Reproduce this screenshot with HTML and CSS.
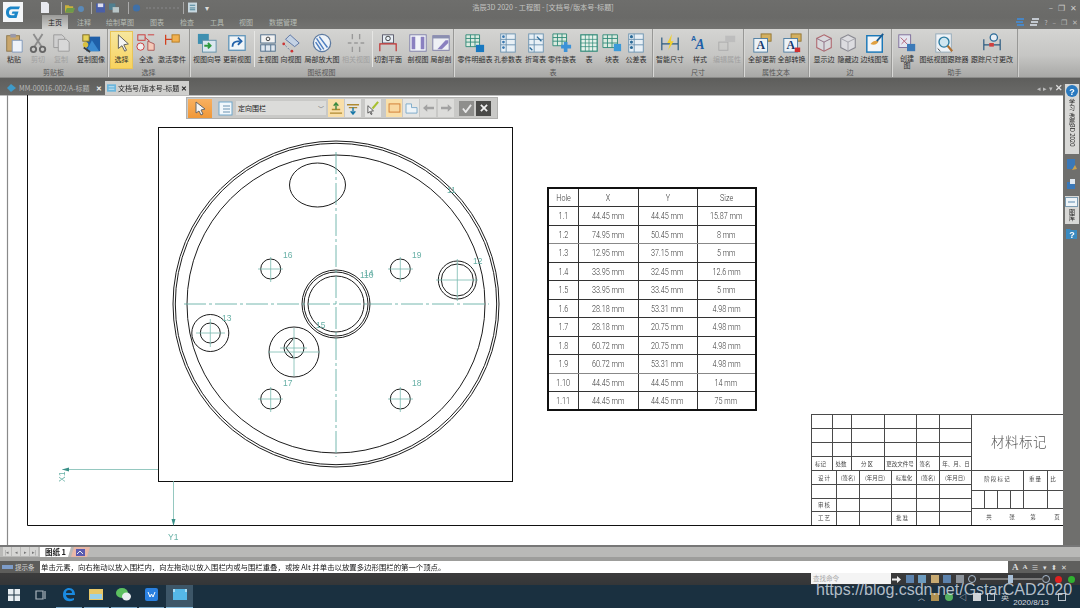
FILE: index.html
```html
<!DOCTYPE html>
<html lang="zh-CN">
<head>
<meta charset="utf-8">
<title>浩辰3D 2020 - 工程图</title>
<link rel="stylesheet" href="styles.css">
</head>
<body>
<div class="app">
  <header class="titlebar">
    <div class="logo"><svg width="20" height="20" viewBox="0 0 20 20"><rect width="20" height="20" fill="#f4f6f8"/><path d="M17 4.500H8.500C5 4.500 3 7 3 10.500S5 16 8 16h5.500l2-6.500H9.500l-.8 2.200h3l-.5 1.600H8.400C6.600 13.300 6 12 6 10.500S6.800 7.200 8.800 7.200h7z" fill="#1c86c8"/></svg></div>
    <div class="title-main">
      <div class="title-top">
        <div class="qat">
          <svg class="q1" width="10" height="11" viewBox="0 0 10 11"><path d="M1 0h6l2 2v9H1z" fill="#e8eaf0"/></svg>
          <span class="qsep q2"></span>
          <svg class="q3" width="10" height="10" viewBox="0 0 11 10"><path d="M0 2h4l1 1h4v7H0z" fill="#c9b03c"/><path d="M2 5h9l-2 5H0z" fill="#6d9a4a"/></svg>
          <svg class="q4" width="9" height="10" viewBox="0 0 9 10"><circle cx="4" cy="6" r="3" fill="#5b8ab8"/></svg>
          <span class="qsep q5"></span>
          <svg class="q6" width="9" height="10" viewBox="0 0 10 10"><rect width="10" height="10" fill="#4a5fa8"/><rect x="2" width="6" height="4" fill="#dde"/></svg>
          <svg class="q7" width="10" height="10" viewBox="0 0 11 10"><rect width="7" height="7" fill="#4f7f90"/><rect x="4" y="4" width="7" height="6" fill="#b9c6c8"/></svg>
          <span class="qsep q8"></span>
          <svg class="q9" width="9" height="10" viewBox="0 0 10 10"><circle cx="5" cy="5" r="4" fill="#3f70a8"/></svg>
          <span class="q10"></span>
          <span class="qsep q11"></span>
          <svg class="q12" width="9" height="11" viewBox="0 0 10 11"><rect width="10" height="11" fill="#c8d8e0"/><path d="M2 3h6M2 6h6M2 8h6" stroke="#3d7a90"/></svg>
          <span class="q13">▾</span>
        </div>
        <div class="doc-title">浩辰3D 2020 - 工程图 - [文档号/版本号-标题]</div>
        <div class="win-btns"><span>–</span><span>❐</span><span>✕</span></div>
      </div>
      <div class="title-tabs">
        <nav class="ribbon-tabs">
          <span class="rt active w26">主页</span>
          <span class="rt w32">注释</span>
          <span class="rt w40">绘制草图</span>
          <span class="rt w34">图表</span>
          <span class="rt w26">检查</span>
          <span class="rt w34">工具</span>
          <span class="rt w24">视图</span>
          <span class="rt w50">数据管理</span>
        </nav>
        <div class="help-btns">
          <svg width="9" height="9" viewBox="0 0 9 9"><path d="M1 1h7M0 4h7M1 7h7" stroke="#3f8fe0" stroke-width="1.400"/></svg>
          <svg width="9" height="9" viewBox="0 0 9 9"><path d="M2 1h7M1 4h7M0 7h7" stroke="#dfe8f2" stroke-width="1.600"/></svg>
          <span>?</span><span>–</span><span>❐</span><span>✕</span>
        </div>
      </div>
    </div>
  </header>

  <section class="ribbon">
    <div class="group g108">
      <div class="tools">
        <div class="tool w28"><svg class="ic" viewBox="0 0 22 22"><rect x="3" y="3" width="14" height="17" fill="#c9a66b" stroke="#8b744a"/><rect x="7" y="1" width="6" height="4" fill="#99a"/><path d="M9 8h11v13H9z" fill="#eef2f8" stroke="#7a95b8"/></svg><span>粘贴</span></div>
        <div class="tool w20 off"><svg class="ic" viewBox="0 0 22 22"><path d="M6 1l9 14M16 1L7 15" stroke="#8d8d8d" stroke-width="2"/><circle cx="6" cy="18" r="3" fill="none" stroke="#666" stroke-width="2"/><circle cx="16" cy="18" r="3" fill="none" stroke="#666" stroke-width="2"/></svg><span>剪切</span></div>
        <div class="tool w26 off"><svg class="ic" viewBox="0 0 22 22"><path d="M3 2h9l3 3v11H3z" fill="#cfcfcf" stroke="#999"/><path d="M8 7h9l3 3v10H8z" fill="#d8d8d8" stroke="#999"/></svg><span>复制</span></div>
        <div class="tool w34"><svg class="ic" viewBox="0 0 22 22"><rect x="6" y="4" width="15" height="16" fill="#1f5fa8"/><path d="M12 8l8 12H6z" fill="#3b8ad0"/><rect x="2" y="2" width="7" height="7" fill="#e6d35a" stroke="#7a6a20"/><circle cx="5" cy="13" r="3" fill="#d8c040"/><path d="M3 16l7 5" stroke="#3a3a3a" stroke-width="2"/></svg><span>复制图像</span></div>
      </div>
      <div class="glabel">剪贴板</div>
    </div>
    <div class="group g82">
      <div class="tools">
        <div class="tool w23 ml2 active"><svg class="ic" viewBox="0 0 22 22"><path d="M7 2v15l4-3 3 6 2-1-3-6 5-1z" fill="#f4f4f4" stroke="#555"/></svg><span>选择</span></div>
        <div class="tool w26"><svg class="ic" viewBox="0 0 22 22"><rect x="2" y="2" width="8" height="6" fill="none" stroke="#c33"/><path d="M13 2h7M10 5l5 4" stroke="#c33"/><circle cx="5" cy="15" r="4" fill="#eee" stroke="#c33"/><path d="M13 9v10h7V12z" fill="#f5c9b8" stroke="#a55"/></svg><span>全选</span></div>
        <div class="tool w26"><svg class="ic" viewBox="0 0 22 22"><path d="M4 2v11M4 7h10" stroke="#d2401e" stroke-width="1.400"/><rect x="11" y="2" width="8" height="8" fill="#f0b050" stroke="#b57a20"/></svg><span>激活零件</span></div>
      </div>
      <div class="glabel">选择</div>
    </div>
    <div class="group g264">
      <div class="tools">
        <div class="tool w34"><svg class="ic" viewBox="0 0 22 22"><rect x="1" y="1" width="12" height="11" fill="#3e8fb0"/><rect x="6" y="8" width="15" height="13" fill="#dbe7ef" stroke="#5e8ea8"/><path d="M8 14h6M12 11l3 3-3 3" stroke="#2e9a3e" stroke-width="2" fill="none"/></svg><span>视图向导</span></div>
        <div class="tool w26"><svg class="ic" viewBox="0 0 22 22"><rect x="2" y="3" width="18" height="16" fill="#f1f5f8" stroke="#5d93b8" stroke-width="1.400"/><path d="M6 15c0-5 3-6 8-6M12 5l4 4-4 4" fill="none" stroke="#2060a8" stroke-width="2"/></svg><span>更新视图</span></div>
        <div class="rsep w8"></div>
        <div class="tool w20"><svg class="ic" viewBox="0 0 22 22"><rect x="3" y="2" width="16" height="9" fill="#f2f2f2" stroke="#4a6a88"/><circle cx="11" cy="6.500" r="2" fill="none" stroke="#333"/><rect x="3" y="13" width="16" height="7" fill="#dfe6ee" stroke="#4a6a88"/><path d="M8 13v7M14 13v7" stroke="#4a6a88"/></svg><span>主视图</span></div>
        <div class="tool w26"><svg class="ic" viewBox="0 0 22 22"><path d="M10 2l10 9-5 4L5 7z" fill="#c4d2e4" stroke="#5670a0"/><path d="M2 11l9 9" stroke="#5670a0" stroke-dasharray="2 2"/><circle cx="3" cy="12" r="1.500" fill="#c33"/><circle cx="12" cy="20" r="1.500" fill="#c33"/></svg><span>向视图</span></div>
        <div class="tool w36"><svg class="ic" viewBox="0 0 22 22"><circle cx="11" cy="11" r="9.500" fill="#eef3f8" stroke="#5d7aa0" stroke-width="1.400"/><path d="M5 6l8 12M8 4l9 12M4 10l6 9" stroke="#4f7fc0" stroke-width="1.600"/></svg><span>局部放大图</span></div>
        <div class="tool w32 off"><svg class="ic" viewBox="0 0 22 22"><path d="M7 1v6M7 15v6M15 1v6M15 15v6M2 11h4M9 11h4M16 11h4" stroke="#999" stroke-width="1.500"/></svg><span>相关视图</span></div>
        <div class="rsep w0"></div>
        <div class="tool w32"><svg class="ic" viewBox="0 0 22 22"><rect x="5" y="2" width="12" height="9" fill="#e7eef5" stroke="#556"/><circle cx="11" cy="6" r="2.500" fill="none" stroke="#333"/><path d="M2 20v-8h18v8" fill="none" stroke="#c03030" stroke-width="1.300"/></svg><span>切割平面</span></div>
        <div class="tool w28"><svg class="ic" viewBox="0 0 22 22"><rect x="2" y="2" width="18" height="18" fill="#f2f4f8" stroke="#7a7aa8"/><path d="M4 4h4v14H4zM14 4h4v14h-4z" fill="#8a80c0"/></svg><span>剖视图</span></div>
        <div class="tool w18"><svg class="ic" viewBox="0 0 22 22"><rect x="2" y="3" width="18" height="16" fill="#eef0f5" stroke="#7a7aa8"/><rect x="2" y="3" width="18" height="3" fill="#8a8fb0"/><path d="M7 18l9-10h3v3l-7 7z" fill="#8a80c0"/></svg><span>局部剖</span></div>
      </div>
      <div class="glabel">图纸视图</div>
    </div>
    <div class="group g199">
      <div class="tools">
        <div class="tool w42"><svg class="ic" viewBox="0 0 22 22"><path d="M1 2h15v13H1z" fill="#dcebe0" stroke="#2f8a78"/><path d="M1 6h15M1 10h15M6 2v13M11 2v13" stroke="#2f8a78"/><rect x="12" y="13" width="9" height="8" fill="#1878c0"/></svg><span>零件明细表</span></div>
        <div class="tool w24"><svg class="ic" viewBox="0 0 22 22"><rect x="3" y="1" width="16" height="20" fill="#e8f0f6" stroke="#6a92b0"/><path d="M9 1v20M3 7h16M3 13h16" stroke="#6a92b0"/><circle cx="6" cy="4" r="1.500" fill="#3a78b0"/><circle cx="6" cy="10" r="1.500" fill="#3a78b0"/><circle cx="6" cy="16" r="1.500" fill="#3a78b0"/></svg><span>孔参数表</span></div>
        <div class="tool w31"><svg class="ic" viewBox="0 0 22 22"><rect x="3" y="1" width="16" height="20" fill="#e8f0f6" stroke="#6a92b0"/><path d="M9 1v20M3 7h16M3 13h16" stroke="#6a92b0"/><path d="M4 16l3 3M12 4l5 5" stroke="#2a6a98" stroke-width="1.500"/></svg><span>折弯表</span></div>
        <div class="tool w22"><svg class="ic" viewBox="0 0 22 22"><path d="M1 1h15v13H1z" fill="#dcebe0" stroke="#2f8a78"/><path d="M1 5h15M1 9h15M6 1v13M11 1v13" stroke="#2f8a78"/><path d="M15 10v11M10 15h11" stroke="#3c92d8" stroke-width="4"/></svg><span>零件族表</span></div>
        <div class="tool w32"><svg class="ic" viewBox="0 0 22 22"><rect x="2" y="2" width="18" height="18" fill="#e6f2ea" stroke="#2f8a78" stroke-width="1.300"/><path d="M2 7h18M2 11h18M2 15h18M7 2v18M11 2v18M15 2v18" stroke="#2f8a78" stroke-width=".8"/></svg><span>表</span></div>
        <div class="tool w14"><svg class="ic" viewBox="0 0 22 22"><path d="M1 2h16v14H1z" fill="#dcebe0" stroke="#2f8a78"/><path d="M1 6h16M1 11h16M6 2v14M11 2v14" stroke="#2f8a78"/><rect x="13" y="12" width="8" height="8" fill="#3c9ad8"/></svg><span>块表</span></div>
        <div class="tool w34"><svg class="ic" viewBox="0 0 22 22"><rect x="3" y="1" width="16" height="20" fill="#e8f0f6" stroke="#6a92b0"/><path d="M9 1v20M3 7h16M3 13h16" stroke="#6a92b0"/><circle cx="6" cy="4" r="1.700" fill="#2a6a98"/><circle cx="6" cy="10" r="1.700" fill="#2a6a98"/><circle cx="6" cy="16" r="1.700" fill="#2a6a98"/></svg><span>公差表</span></div>
      </div>
      <div class="glabel">表</div>
    </div>
    <div class="group g91">
      <div class="tools">
        <div class="tool w34"><svg class="ic" viewBox="0 0 22 22"><path d="M2 5v14M20 5v14M2 12h18" stroke="#2a5a80" stroke-width="1.300"/><path d="M13 1l-5 10h3l-2 8 6-10h-3z" fill="#f0d030"/></svg><span>智能尺寸</span></div>
        <div class="tool w26"><svg class="ic" viewBox="0 0 22 22"><text class="ic-a" x="6" y="18">A</text><text class="ic-b" x="1" y="9">A</text></svg><span>样式</span></div>
        <div class="tool w28 off"><svg class="ic" viewBox="0 0 22 22"><rect x="2" y="10" width="10" height="9" fill="none" stroke="#aaa"/><rect x="9" y="3" width="11" height="7" fill="#bdbdbd"/></svg><span>编辑属性</span></div>
      </div>
      <div class="glabel">尺寸</div>
    </div>
    <div class="group g65">
      <div class="tools">
        <div class="tool w36"><svg class="ic" viewBox="0 0 22 22"><rect x="10" y="1" width="11" height="8" fill="#d4b060" stroke="#927430"/><rect x="2" y="6" width="15" height="15" fill="#edf2f6" stroke="#4a7aa0"/><text class="ic-c" x="5" y="18">A</text></svg><span>全部更新</span></div>
        <div class="tool w23"><svg class="ic" viewBox="0 0 22 22"><rect x="10" y="1" width="11" height="8" fill="#d4b060" stroke="#927430"/><rect x="2" y="6" width="15" height="15" fill="#edf2f6" stroke="#4a7aa0"/><text class="ic-c" x="5" y="18">A</text><rect x="14" y="16" width="6" height="5" fill="#d03030"/></svg><span>全部转换</span></div>
      </div>
      <div class="glabel">属性文本</div>
    </div>
    <div class="group g83">
      <div class="tools">
        <div class="tool w30"><svg class="ic" viewBox="0 0 22 22"><path d="M11 2l8 4v10l-8 4-8-4V6z" fill="#d8d8dc" stroke="#b06a70" stroke-width="1.200"/><path d="M3 6l8 4 8-4M11 10v10" fill="none" stroke="#8a6a80"/></svg><span>显示边</span></div>
        <div class="tool w18"><svg class="ic" viewBox="0 0 22 22"><path d="M11 2l8 4v10l-8 4-8-4V6z" fill="#dcdce0" stroke="#8a8a92" stroke-width="1.200"/><path d="M3 6l8 4 8-4M11 10v10" fill="none" stroke="#a0a0a8"/></svg><span>隐藏边</span></div>
        <div class="tool w35"><svg class="ic" viewBox="0 0 22 22"><rect x="2" y="3" width="17" height="18" fill="#f2f5f8" stroke="#1a78b8" stroke-width="1.600"/><path d="M6 12c3-4 6-4 9-3-1 3-5 5-9 3z" fill="#e0a040"/><path d="M13 9l7-8" stroke="#1a5a90" stroke-width="2"/></svg><span>边线图笔</span></div>
      </div>
      <div class="glabel">边</div>
    </div>
    <div class="group g126 last">
      <div class="tools">
        <div class="tool w30"><svg class="ic" viewBox="0 0 22 22"><rect x="2" y="2" width="13" height="14" fill="#e4e6f0" stroke="#7a6a98"/><path d="M4 5l8 8M5 12l6-6" stroke="#b05a70"/><rect x="11" y="12" width="9" height="8" fill="#3c7ab8"/></svg><span class="wrap">创建图</span></div>
        <div class="tool w44"><svg class="ic" viewBox="0 0 22 22"><rect x="2" y="1" width="17" height="20" fill="#eef2f6" stroke="#90a8b8"/><circle cx="11" cy="10" r="5.500" fill="#cfe6f0" stroke="#2a7aa0" stroke-width="1.500"/><path d="M15 14l5 6" stroke="#b07030" stroke-width="2.400"/><path d="M4 17l3 3" stroke="#333"/></svg><span>图纸视图跟踪器</span></div>
        <div class="tool w52"><svg class="ic" viewBox="0 0 22 22"><path d="M2 7v12M20 7v12M2 13h18" stroke="#2a5a80" stroke-width="1.300"/><rect x="8" y="11" width="5" height="4" fill="#d04040"/><circle cx="13" cy="5" r="4" fill="#e8eef5" stroke="#2a6a98" stroke-width="1.400"/></svg><span>跟踪尺寸更改</span></div>
      </div>
      <div class="glabel">助手</div>
    </div>
  </section>

  <div class="doctabs">
    <div class="doctab first"><svg width="11" height="10" viewBox="0 0 11 10"><path d="M1 5l4-4 5 4-5 4z" fill="#3f9ac8"/></svg><span class="dt-name">MM-00016-002/A-标题</span><b>✕</b></div>
    <div class="doctab current"><svg width="9" height="8" viewBox="0 0 11 9"><rect width="11" height="9" fill="#6cb6dc"/><path d="M2 3h7M2 6h7" stroke="#d8eef8"/></svg><span class="dt-name">文档号/版本号-标题</span><b>✕</b></div>
    <div class="doc-nav"><span>◂</span><span>▸</span><span>▾</span><b>✕</b></div>
  </div>

  <main class="workspace">
    <div class="canvas">
      <svg class="drawing" width="1063" height="450" viewBox="0 95 1063 450">
        <path class="gray" d="M7.500 95V545"/>
        <path class="border" d="M27.500 95V525.500H1063"/>
        <rect class="border" x="158.500" y="127.500" width="354" height="354"/>
        <g class="part">
          <circle cx="336" cy="304" r="163"/><circle cx="336" cy="304" r="160.700"/><circle cx="336" cy="304" r="149"/>
          <ellipse cx="317.500" cy="185" rx="28" ry="22"/>
          <circle cx="336" cy="304" r="34"/><circle cx="336" cy="304" r="32"/><circle cx="336" cy="304" r="28"/>
          <circle cx="270.700" cy="269" r="10"/><circle cx="400.300" cy="269" r="10"/><circle cx="270.700" cy="399" r="10"/><circle cx="400.300" cy="399" r="10"/>
          <circle cx="457.300" cy="280" r="19"/><circle cx="457.300" cy="280" r="16"/>
          <circle cx="210.300" cy="333" r="18.500"/><circle cx="210.300" cy="333" r="10"/>
          <circle cx="294" cy="352" r="25"/><circle cx="294" cy="348" r="10"/>
          <path d="M293 339l-7 9 7 9"/>
        </g>
        <g class="center">
          <path d="M184 304H489M336 152V457"/>
        </g>
        <g class="tick">
          <path d="M258 269h25M270.700 257v25M388 269h25M400.300 257v25M258 399h25M270.700 387v25M388 399h25M400.300 387v25M436 280h42M457.300 259v42M196 333h29M210.300 319v28M268 352h52M294 328v48M280 348h27"/>
          <path d="M62.500 469.500H158M173.500 481V525"/>
          <path class="arrow" d="M62 469.500l7-2v4zM173.500 526l-2-7h4z"/>
        </g>
        <g class="dim">
          <text x="283" y="258">16</text><text x="412" y="258">19</text><text x="473" y="264">12</text>
          <text x="222" y="321">13</text><text x="412" y="386">18</text><text x="283" y="386">17</text>
          <text x="447" y="193">11</text><text x="360" y="278">110</text><text x="364" y="276">14</text><text x="316" y="328">15</text>
          <text x="168" y="540">Y1</text><text transform="translate(65 482) rotate(-90)">X1</text>
        </g>
        <g class="tb-lines">
          <path d="M811.500 414.500H1063M811.500 428.500H971M811.500 442.500H971M811.500 456.500H971M811.500 470.500H1063M811.500 484.500H971M811.500 498.500H971M811.500 511.500H971M971.500 490.500H1063M971.500 508.500H1063"/>
          <path d="M811.500 414V525M832.500 414V470M851.500 414V470M884.500 414V470M916.500 414V525M939.500 414V525M971.500 414V525M836.500 470V525M859.500 470V525M891.500 470V525M1023.500 470V508M1047.500 470V508M984.500 490V508M997.500 490V508M1010.500 490V508"/>
        </g>
        <text class="tb-title" x="1019" y="447">材料标记</text>
        <g class="tb-text">
          <text x="820.500" y="465.500">标记</text><text x="841" y="465.500">处数</text><text x="867" y="465.500">分 区</text><text x="900" y="465.500">更改文件号</text><text x="925" y="465.500">签名</text><text x="956" y="465.500">年、月、日</text>
          <text x="824" y="479.500">设 计</text><text x="848" y="479.500">(签名)</text><text x="875" y="479.500">(年月日)</text><text x="904" y="479.500">标准化</text><text x="928" y="479.500">(签名)</text><text x="955" y="479.500">(年月日)</text>
          <text x="997" y="480.500">阶 段 标 记</text><text x="1035" y="480.500">重 量</text><text x="1053" y="480.500">比</text>
          <text x="824" y="507">审 核</text><text x="824" y="520">工 艺</text><text x="902" y="520">批 准</text>
          <text x="989" y="518.500">共</text><text x="1012" y="518.500">张</text><text x="1033" y="518.500">第</text><text x="1057" y="518.500">页</text>
        </g>
      </svg>

      <table class="holes">
        <tr class="head"><th><span>Hole</span></th><th><span>X</span></th><th class="gcol"><span>Y</span></th><th><span>Size</span></th></tr>
        <tr><td><span>1.1</span></td><td><span>44.45 mm</span></td><td class="gcol"><span>44.45 mm</span></td><td><span>15.87 mm</span></td></tr>
        <tr class="grow"><td><span>1.2</span></td><td><span>74.95 mm</span></td><td class="gcol"><span>50.45 mm</span></td><td><span>8 mm</span></td></tr>
        <tr><td><span>1.3</span></td><td><span>12.95 mm</span></td><td class="gcol"><span>37.15 mm</span></td><td><span>5 mm</span></td></tr>
        <tr><td><span>1.4</span></td><td><span>33.95 mm</span></td><td class="gcol"><span>32.45 mm</span></td><td><span>12.6 mm</span></td></tr>
        <tr><td><span>1.5</span></td><td><span>33.95 mm</span></td><td class="gcol"><span>33.45 mm</span></td><td><span>5 mm</span></td></tr>
        <tr><td><span>1.6</span></td><td><span>28.18 mm</span></td><td class="gcol"><span>53.31 mm</span></td><td><span>4.98 mm</span></td></tr>
        <tr><td><span>1.7</span></td><td><span>28.18 mm</span></td><td class="gcol"><span>20.75 mm</span></td><td><span>4.98 mm</span></td></tr>
        <tr><td><span>1.8</span></td><td><span>60.72 mm</span></td><td class="gcol"><span>20.75 mm</span></td><td><span>4.98 mm</span></td></tr>
        <tr class="grow"><td><span>1.9</span></td><td><span>60.72 mm</span></td><td class="gcol"><span>53.31 mm</span></td><td><span>4.98 mm</span></td></tr>
        <tr><td><span>1.10</span></td><td><span>44.45 mm</span></td><td class="gcol"><span>44.45 mm</span></td><td><span>14 mm</span></td></tr>
        <tr><td><span>1.11</span></td><td><span>44.45 mm</span></td><td class="gcol"><span>44.45 mm</span></td><td><span>75 mm</span></td></tr>
      </table>

      <div class="float-bar">
        <span class="fb orange big"><svg width="12" height="15" viewBox="0 0 12 15"><path d="M2 1v11l3-2 2 4 2-1-2-4 4-1z" fill="#f6f6f6" stroke="#666"/></svg></span>
        <span class="fb"><svg width="15" height="15" viewBox="0 0 15 15"><rect x="1" y="1" width="13" height="13" fill="#f2f8fc" stroke="#70a8cc"/><path d="M5 5h7M5 8h7M5 11h7" stroke="#6a92b0"/></svg></span>
        <span class="combo"><span>定向围栏</span><i>﹀</i></span>
        <span class="fb orange-lt"><svg width="14" height="13" viewBox="0 0 15 14"><path d="M1 12h13M3 8h9" stroke="#b08a30" stroke-width="1.500"/><path d="M7.500 1v7M5 4l2.500-3L10 4" stroke="#3a8a40" fill="none" stroke-width="1.500"/></svg></span>
        <span class="fb lt"><svg width="14" height="13" viewBox="0 0 15 14"><path d="M1 3h13M3 6h9" stroke="#b08a30" stroke-width="1.500"/><path d="M7.500 6v7M5 10l2.500 3L10 10" stroke="#1878a8" fill="none" stroke-width="1.500"/></svg></span>
        <span class="fb lt ml3"><svg width="14" height="14" viewBox="0 0 15 15"><path d="M2 5v8l2-1.500 1.500 3 1-.5L5 11l3-.5z" fill="#f4f4f4" stroke="#555"/><path d="M7 8l6-7" stroke="#a8c030" stroke-width="2.200"/></svg></span>
        <span class="fb orange-lt ml4"><svg width="13" height="10" viewBox="0 0 14 11"><rect x="1" y="1" width="12" height="9" fill="#f8d8a0" stroke="#d07a30"/></svg></span>
        <span class="fb lt"><svg width="13" height="11" viewBox="0 0 14 12"><path d="M1 1h6v4h6v6H1z" fill="#eef4f8" stroke="#7aa8c8"/></svg></span>
        <span class="fb lt2"><svg width="11" height="8" viewBox="0 0 13 9"><path d="M0 4.500L5 0v3h8v3H5v3z" fill="#a2a2a2"/></svg></span>
        <span class="fb lt2 ml1"><svg width="11" height="8" viewBox="0 0 13 9"><path d="M13 4.500L8 0v3H0v3h8v3z" fill="#a2a2a2"/></svg></span>
        <span class="fb sq gr"><svg width="10" height="9" viewBox="0 0 11 10"><path d="M1 5l3 4 6-8" stroke="#e8e8e8" stroke-width="2" fill="none"/></svg></span>
        <span class="fb sq dk"><svg width="8" height="8" viewBox="0 0 9 9"><path d="M1 1l7 7M8 1L1 8" stroke="#f0f0f0" stroke-width="2"/></svg></span>
      </div>
    </div>
    <aside class="rightbar">
      <div class="rb-tab">
        <svg width="12" height="12" viewBox="0 0 12 12"><circle cx="6" cy="6" r="6" fill="#2a7ac0"/><text class="rb-q" x="6" y="9.500">?</text></svg>
        <span class="rb-text">学习 浩辰3D 2020</span>
      </div>
      <div class="rb-icon"><svg width="12" height="13" viewBox="0 0 12 13"><rect x="1" y="1" width="8" height="10" fill="#3a78b8"/><path d="M6 12l5-1-2-4z" fill="#c8a050"/></svg></div>
      <div class="rb-icon"><svg width="12" height="12" viewBox="0 0 12 12"><rect x="1" y="4" width="8" height="7" fill="#3a78b8"/><rect x="4" y="1" width="5" height="5" fill="#e0e8f0"/></svg></div>
      <div class="rb-tab short"><svg width="13" height="10" viewBox="0 0 13 10"><rect x=".5" y=".5" width="12" height="9" fill="#eef4f8" stroke="#7a9ab0"/><path d="M3 5h7" stroke="#5a8ab0"/></svg><span class="rb-text">图库</span></div>
      <div class="rb-help"><svg width="13" height="12" viewBox="0 0 13 12"><path d="M1 1h4l1 1h6v9H1z" fill="#3a8ac0"/><text class="rb-q" x="7" y="9.500">?</text></svg></div>
    </aside>
  </main>

  <div class="sheetbar">
    <div class="sheet-nav"><span>|◂</span><span>◂</span><span>▸</span><span>▸|</span></div>
    <div class="sheet-tab">图纸 1</div>
    <div class="sheet-tab2"><svg width="9" height="7" viewBox="0 0 9 7"><rect width="9" height="7" fill="#5a5ab0"/><path d="M1 5l3-3 3 3" stroke="#eee" fill="none"/></svg></div>
  </div>
  <div class="sheet-gap"></div>

  <div class="prompt">
    <div class="prompt-label"><i></i>提示条</div>
    <div class="prompt-text">单击元素，向右拖动以放入围栏内，向左拖动以放入围栏内或与围栏重叠，或按 Alt 并单击以放置多边形围栏的第一个顶点。</div>
    <div class="prompt-tools"><b>A</b><b class="small">A</b><span>≡</span><span>▾</span><span>⬍</span><span>✕</span></div>
  </div>

  <div class="strip">
    <div class="search">查找命令</div>
    <div class="strip-tools">
      <svg width="9" height="7" viewBox="0 0 9 7"><path d="M0 2.500h5V0l4 3.500L5 7V4.500H0z" fill="#eee"/></svg>
      <i class="si blue"></i><i class="si blue2"></i><i class="si tan"></i><i class="si blue"></i><i class="si grey"></i><i class="si ring"></i>
      <span class="slider"><em></em></span>
      <i class="si ring"></i>
      <i class="dot red"></i><i class="dot green"></i>
    </div>
  </div>

  <footer class="taskbar">
    <div class="tb-btn"><svg width="12" height="12" viewBox="0 0 12 12"><path d="M0 0h5.500v5.500H0zM6.500 0H12v5.500H6.500zM0 6.500h5.500V12H0zM6.500 6.500H12V12H6.500z" fill="#e8eef2"/></svg></div>
    <div class="tb-btn"><svg width="12" height="10" viewBox="0 0 12 10"><path d="M1 1h7v8H1zM10 1v8" fill="none" stroke="#aab4bc" stroke-width="1.200"/></svg></div>
    <div class="tb-btn run"><svg width="14" height="15" viewBox="0 0 14 15"><path d="M1 8c0-5 3-7 6-7 4 0 6 3 6 7H4c0 3 4 5 8 3v2c-6 3-11 0-11-5zM4 6h6c0-2-1-3-3-3S4 4 4 6z" fill="#1a8ae0"/></svg></div>
    <div class="tb-btn run"><svg width="14" height="11" viewBox="0 0 14 11"><rect width="14" height="11" fill="#e8c868"/><rect x="1" y="5" width="12" height="5" fill="#9ad0e8"/></svg></div>
    <div class="tb-btn run"><svg width="15" height="13" viewBox="0 0 15 13"><ellipse cx="6" cy="5" rx="6" ry="5" fill="#5cc060"/><ellipse cx="10.500" cy="8.500" rx="4.500" ry="4" fill="#e8eef0"/></svg></div>
    <div class="tb-btn run"><svg width="13" height="13" viewBox="0 0 13 13"><rect width="13" height="13" rx="2" fill="#2a80e0"/><path d="M3 4l2 5 1.500-3L8 9l2-5" stroke="#fff" fill="none"/></svg></div>
    <div class="tb-btn current"><svg width="14" height="11" viewBox="0 0 14 11"><rect width="14" height="11" fill="#55b8e8"/><rect y="0" width="2" height="3" fill="#a8dcf4"/><rect x="12" width="2" height="3" fill="#a8dcf4"/></svg></div>
    <div class="tray">
      <span class="chev">︿</span>
      <i class="ti tan"></i><i class="ti green"></i><span class="ti-t">◁</span><i class="ti white"></i><i class="ti outline"></i><span class="ti-t">英</span>
      <div class="clock">2020/8/13</div>
      <i class="ti outline"></i>
    </div>
  </footer>

  <div class="watermark">https://blog.csdn.net/GstarCAD2020</div>
</div>
</body>
</html>
```
FILE: styles.css
```css
* { box-sizing: border-box; }
html, body { margin: 0; padding: 0; background: #222; }
body { font-family: "Noto Sans CJK SC", "Liberation Sans", sans-serif; }
.app {
  position: relative; width: 1080px; height: 608px; overflow: hidden;
  display: flex; flex-direction: column; filter: blur(.45px);
}
svg { display: block; flex: none; }

/* title bar */
.titlebar { height: 29px; display: flex; background: linear-gradient(#6e6e6c, #6a6a68 60%, #737371); }
.logo { width: 26px; padding: 2px 0 0 3px; }
.title-main { flex: 1; display: flex; flex-direction: column; min-width: 0; }
.title-top { height: 15px; display: flex; align-items: center; position: relative; }
.qat { width: 190px; flex: none; display: flex; align-items: center; padding-left: 14px; color: #999; font-size: 8px; }
.qsep { width: 1px; height: 12px; background: #aaa; flex: none; }
.q2 { margin-left: 11px; }
.q3 { margin-left: 3px; }
.q4 { margin-left: 2px; }
.q5 { margin-left: 5px; }
.q6 { margin-left: 4px; }
.q7 { margin-left: 4px; }
.q8 { margin-left: 9px; }
.q9 { margin-left: 3px; }
.q10 { width: 33px; height: 2px; flex: none; margin: 0 4px 0 5px; border-bottom: 2px dotted #7a7a7a; }
.q12 { margin-left: 4px; }
.q13 { margin-left: 8px; color: #ddd; }
.doc-title { width: 660px; flex: none; margin-left: -3px; text-align: center; color: #c4c4c2; font-size: 7.200px; line-height: 15px; white-space: nowrap; }
.win-btns { margin-left: auto; display: flex; gap: 5px; padding-right: 3px; color: #ccc; font-size: 8px; }
.title-tabs { height: 14px; display: flex; justify-content: space-between; }
.ribbon-tabs { display: flex; padding-left: 16px; }
.rt { color: #b7bdb5; font-size: 7px; line-height: 14px; text-align: center; white-space: nowrap; }
.rt.active { background: linear-gradient(#9a9a98, #d2d2d0); color: #222; }
.help-btns { display: flex; align-items: center; gap: 5px; padding-right: 2px; color: #bbb; font-size: 6.500px; }

/* shared widths */
.w0 { width: 0; } .w8 { width: 8px; } .w14 { width: 14px; } .w18 { width: 18px; } .w20 { width: 20px; }
.w22 { width: 22px; } .w23 { width: 23px; } .w24 { width: 24px; } .w26 { width: 26px; } .w28 { width: 28px; }
.w30 { width: 30px; } .w31 { width: 31px; } .w32 { width: 32px; } .w34 { width: 34px; } .w35 { width: 35px; }
.w36 { width: 36px; } .w40 { width: 40px; } .w42 { width: 42px; } .w44 { width: 44px; } .w50 { width: 50px; } .w52 { width: 52px; }
.ml1 { margin-left: 1px; } .ml2 { margin-left: 2px; } .ml3 { margin-left: 3px; } .ml4 { margin-left: 4px; }

/* ribbon */
.ribbon { height: 49px; display: flex; background: linear-gradient(#d4d4d2, #c6c6c4 55%, #a8a8a6); border-bottom: 1px solid #8b8b89; }
.group { display: flex; flex-direction: column; border-right: 1px solid #989896; box-shadow: 1px 0 0 #d8d8d6; height: 48px; }
.group.last { box-shadow: 1px 0 0 #d0d0ce; }
.g108 { width: 108px; } .g82 { width: 82px; } .g264 { width: 264px; } .g199 { width: 199px; }
.g91 { width: 91px; } .g65 { width: 65px; } .g83 { width: 83px; } .g126 { width: 126px; }
.tools { height: 39px; padding-top: 2px; display: flex; }
.tool { height: 38px; display: flex; flex-direction: column; align-items: center; padding-top: 2px; font-size: 7px; line-height: 10px; color: #2e2e2e; white-space: nowrap; flex: none; }
.tool > span { margin-top: 1px; }
.tool > .wrap { white-space: normal; width: 15px; text-align: center; line-height: 7px; margin-top: 2px; }
.tool.active { background: linear-gradient(#f6e7a0, #f8d25c); box-shadow: inset 0 0 0 1px #e8c458; }
.tool.off { color: #a0a0a0; }
.ic { width: 20px; height: 20px; }
.ic-a { font: italic bold 15px "Liberation Serif", serif; fill: #1d5fa8; }
.ic-b { font: bold 8px "Liberation Sans", sans-serif; fill: #1d5fa8; }
.ic-c { font: bold 13px "Liberation Serif", serif; fill: #123a70; }
.rsep { height: 36px; flex: none; position: relative; }
.rsep::after { content: ""; position: absolute; left: 50%; top: 0; height: 36px; width: 1px; background: #e6e6e4; }
.glabel { height: 9px; text-align: center; font-size: 7px; line-height: 9px; color: #555; }

/* document tabs */
.doctabs { height: 17px; display: flex; align-items: flex-end; padding-left: 5px; background: linear-gradient(#5e5e5c, #6a6a68); }
.doctab { height: 14px; display: flex; align-items: center; gap: 2px; font-size: 7px; white-space: nowrap; padding: 0 3px 0 1px; }
.doctab.first { width: 100px; color: #b9b9b9; }
.doctab.current { width: 84px; background: #cfcfcd; color: #222; padding-left: 2px; }
.doctab .dt-name { flex: 1; }
.doctab b { font-size: 7px; color: #eee; }
.doctab.current b { color: #222; }
.doc-nav { margin-left: auto; margin-right: 17px; height: 15px; display: flex; align-items: center; gap: 2px; font-size: 7px; color: #bbb; }
.doc-nav b { font-size: 9px; color: #ddd; }

/* canvas */
.workspace { height: 450px; display: flex; }
.canvas { position: relative; width: 1063px; height: 450px; background: #fff; border-top: 1px solid #bdbdbd; }
.drawing { position: absolute; left: 0; top: -1px; }
.border { fill: none; stroke: #111; stroke-width: 1; }
.gray { stroke: #8a8a8a; fill: none; stroke-width: 1.200; }
.part { fill: none; stroke: #1d1d1d; stroke-width: 1; }
.center { fill: none; stroke: #68b0a6; stroke-width: .9; stroke-dasharray: 22 3 3 3; }
.tick { fill: none; stroke: #7abab0; stroke-width: .8; }
.arrow { fill: #3a9088; stroke: none; }
.dim text { font: 300 8.500px "Liberation Sans", sans-serif; fill: #68b0a6; }
.tb-lines path { fill: none; stroke: #4a4a4a; stroke-width: 1; }
.tb-title { font: 300 13.500px "Noto Sans CJK SC", sans-serif; fill: #555; text-anchor: middle; letter-spacing: .5px; }
.tb-text text { font: 400 5.500px "Noto Sans CJK SC", sans-serif; fill: #444; text-anchor: middle; }

.holes {
  position: absolute; left: 547px; top: 91px; width: 210px; height: 224px; table-layout: fixed;
  border-collapse: collapse; border: 2px solid #111; background: #fff;
  font: 300 9.500px Roboto, "Liberation Sans", sans-serif; color: #333; text-align: center;
}
.holes th, .holes td { border: 1px solid #333; padding: 0; font-weight: 300; height: 18.500px; white-space: nowrap; }
.holes th:first-child, .holes td:first-child { width: 30px; }
.holes th:nth-child(2), .holes td:nth-child(2) { width: 60px; }
.holes th:nth-child(3), .holes td:nth-child(3) { width: 59px; }
.holes span { display: inline-block; transform: scaleX(.76); }
.holes .gcol { border-left: 1px solid #8a8a8a; }
.holes .grow td { border-bottom-color: #888; }

.float-bar {
  position: absolute; left: 186px; top: 1px; width: 312px; height: 22px;
  display: flex; align-items: center; gap: 1px; padding-left: 1px;
  background: #c9c9c7; border: 1px solid #b0b0ae;
}
.fb { width: 16px; height: 18px; display: flex; align-items: center; justify-content: center; flex: none; }
.fb.big { width: 24px; height: 19px; margin-right: 4px; }
.fb.orange { background: linear-gradient(#f8b060, #f09838); }
.fb.orange-lt { background: #f9dfa8; }
.fb.lt { background: #e6e6e4; }
.fb.lt2 { background: #dcdcda; }
.fb.sq { width: 15px; height: 15px; }
.fb.gr { background: #8e8e8c; margin-left: 4px; }
.fb.dk { background: #4a4a48; margin-left: 1px; }
.combo { width: 90px; height: 14px; margin: 0 1px 0 2px; background: #dcdcda; display: flex; justify-content: space-between; align-items: center; padding: 0 2px; font-size: 7px; color: #222; flex: none; }
.combo i { font-style: normal; font-size: 6px; color: #777; }

/* right bar */
.rightbar { width: 17px; margin-top: -11px; height: 461px; background: #6f6f6d; position: relative; padding: 0 2px; display: flex; flex-direction: column; align-items: center; }
.rb-tab { width: 14px; height: 70px; background: #d8d8d6; display: flex; flex-direction: column; align-items: center; padding-top: 1px; gap: 2px; overflow: hidden; }
.rb-tab.short { height: 28px; margin-top: 2px; }
.rb-text { writing-mode: vertical-rl; font-size: 6px; line-height: 12px; color: #222; white-space: nowrap; }
.rb-q { font: bold 9px "Liberation Sans", sans-serif; fill: #fff; text-anchor: middle; }
.rb-icon { height: 20px; display: flex; align-items: center; }
.rb-help { margin-top: 4px; }

/* sheet bar */
.sheetbar { height: 12px; display: flex; align-items: flex-end; padding: 0 18px 0 3px; background: linear-gradient(#777 0 2px, #b9b9b7 2px); }
.sheet-nav { display: flex; gap: 1px; height: 9px; margin-bottom: 1px; }
.sheet-nav span { width: 8px; background: #d6d6d4; font-size: 5px; line-height: 9px; text-align: center; color: #777; white-space: nowrap; overflow: hidden; }
.sheet-tab { margin-left: 2px; width: 31px; height: 10px; background: #fff; font-size: 7.500px; font-weight: 700; line-height: 10px; text-align: center; color: #222; clip-path: polygon(3px 0, 100% 0, calc(100% - 3px) 100%, 0 100%, 0 0); white-space: nowrap; }
.sheet-tab2 { width: 19px; height: 10px; background: #e8b8a8; display: flex; align-items: center; justify-content: center; clip-path: polygon(3px 0, 100% 0, calc(100% - 3px) 100%, 0 100%); }
.sheet-gap { height: 4px; background: #9d9d9b; }

/* prompt */
.prompt { height: 12px; display: flex; background: #777; }
.prompt-label { width: 40px; display: flex; align-items: center; gap: 2px; padding-left: 2px; font-size: 6.500px; color: #d5d5d5; background: #5d5d5b; white-space: nowrap; }
.prompt-label i { width: 11px; height: 4px; background: #7d9cc8; display: block; flex: none; }
.prompt-text { width: 968px; background: #fff; color: #111; font-size: 7.400px; line-height: 12px; padding-left: 1px; white-space: nowrap; overflow: hidden; }
.prompt-tools { flex: 1; display: flex; align-items: center; gap: 4px; padding-left: 4px; background: #5f5f5d; color: #ddd; font-size: 7px; }
.prompt-tools b { font: bold 9px "Liberation Serif", serif; }
.prompt-tools .small { font-size: 7px; }

.strip { height: 12px; display: flex; background: linear-gradient(#3c3c3c, #343638); padding-left: 811px; }
.search { width: 80px; height: 11px; background: #f4f4f4; color: #a8a8a8; font-size: 6.500px; line-height: 11px; padding-left: 2px; flex: none; }
.strip-tools { flex: 1; display: flex; align-items: center; gap: 4.500px; padding-left: 1px; }
.si { width: 8px; height: 8px; display: block; flex: none; }
.si.blue { background: #5d83ad; }
.si.blue2 { background: #6d9cc0; }
.si.tan { background: #c8aa72; }
.si.grey { background: #8d949c; }
.si.ring { border: 1.500px solid #a9bcd0; border-radius: 50%; }
.slider { width: 63px; height: 2px; background: #7a7a7a; position: relative; flex: none; margin: 0 -5px 0 -1px; }
.slider em { position: absolute; left: 28px; top: -3px; width: 5px; height: 8px; background: #a9c0d8; }
.dot { width: 7px; height: 7px; border-radius: 50%; display: block; flex: none; }
.dot.red { background: #e02020; }
.dot.green { background: #30b030; margin-left: 1.500px; }

/* taskbar */
.taskbar { height: 23px; display: flex; align-items: stretch; background: #1a3040; }
.tb-btn { width: 27.500px; display: flex; align-items: center; justify-content: center; padding-bottom: 3px; flex: none; }
.tb-btn.run { border-bottom: 1px solid #7aa8c8; margin: 0 1px; width: 25.500px; }
.tb-btn.current { background: #3d5668; border-bottom: 1px solid #8ac0e0; margin-left: 1px; width: 27px; }
.tray { margin-left: auto; display: flex; align-items: center; gap: 6px; padding-right: 14px; color: #c8ccd0; font-size: 8px; }
.chev { font-size: 7px; }
.ti { width: 8px; height: 8px; display: block; flex: none; }
.ti.tan { background: #b09050; }
.ti.green { background: #56b060; border-radius: 50%; }
.ti.white { background: #cfd4d8; }
.ti.outline { border: 1px solid #b8c0c8; }
.ti-t { font-size: 8px; }
.clock { width: 42px; margin-left: -5px; text-align: center; padding-top: 11px; font: 8px "Liberation Sans", sans-serif; color: #d8dce0; white-space: nowrap; }

.watermark { position: absolute; left: 816px; top: 580px; font: 16px/20px "Liberation Sans", sans-serif; color: rgba(214, 222, 230, .82); white-space: nowrap; }
```
